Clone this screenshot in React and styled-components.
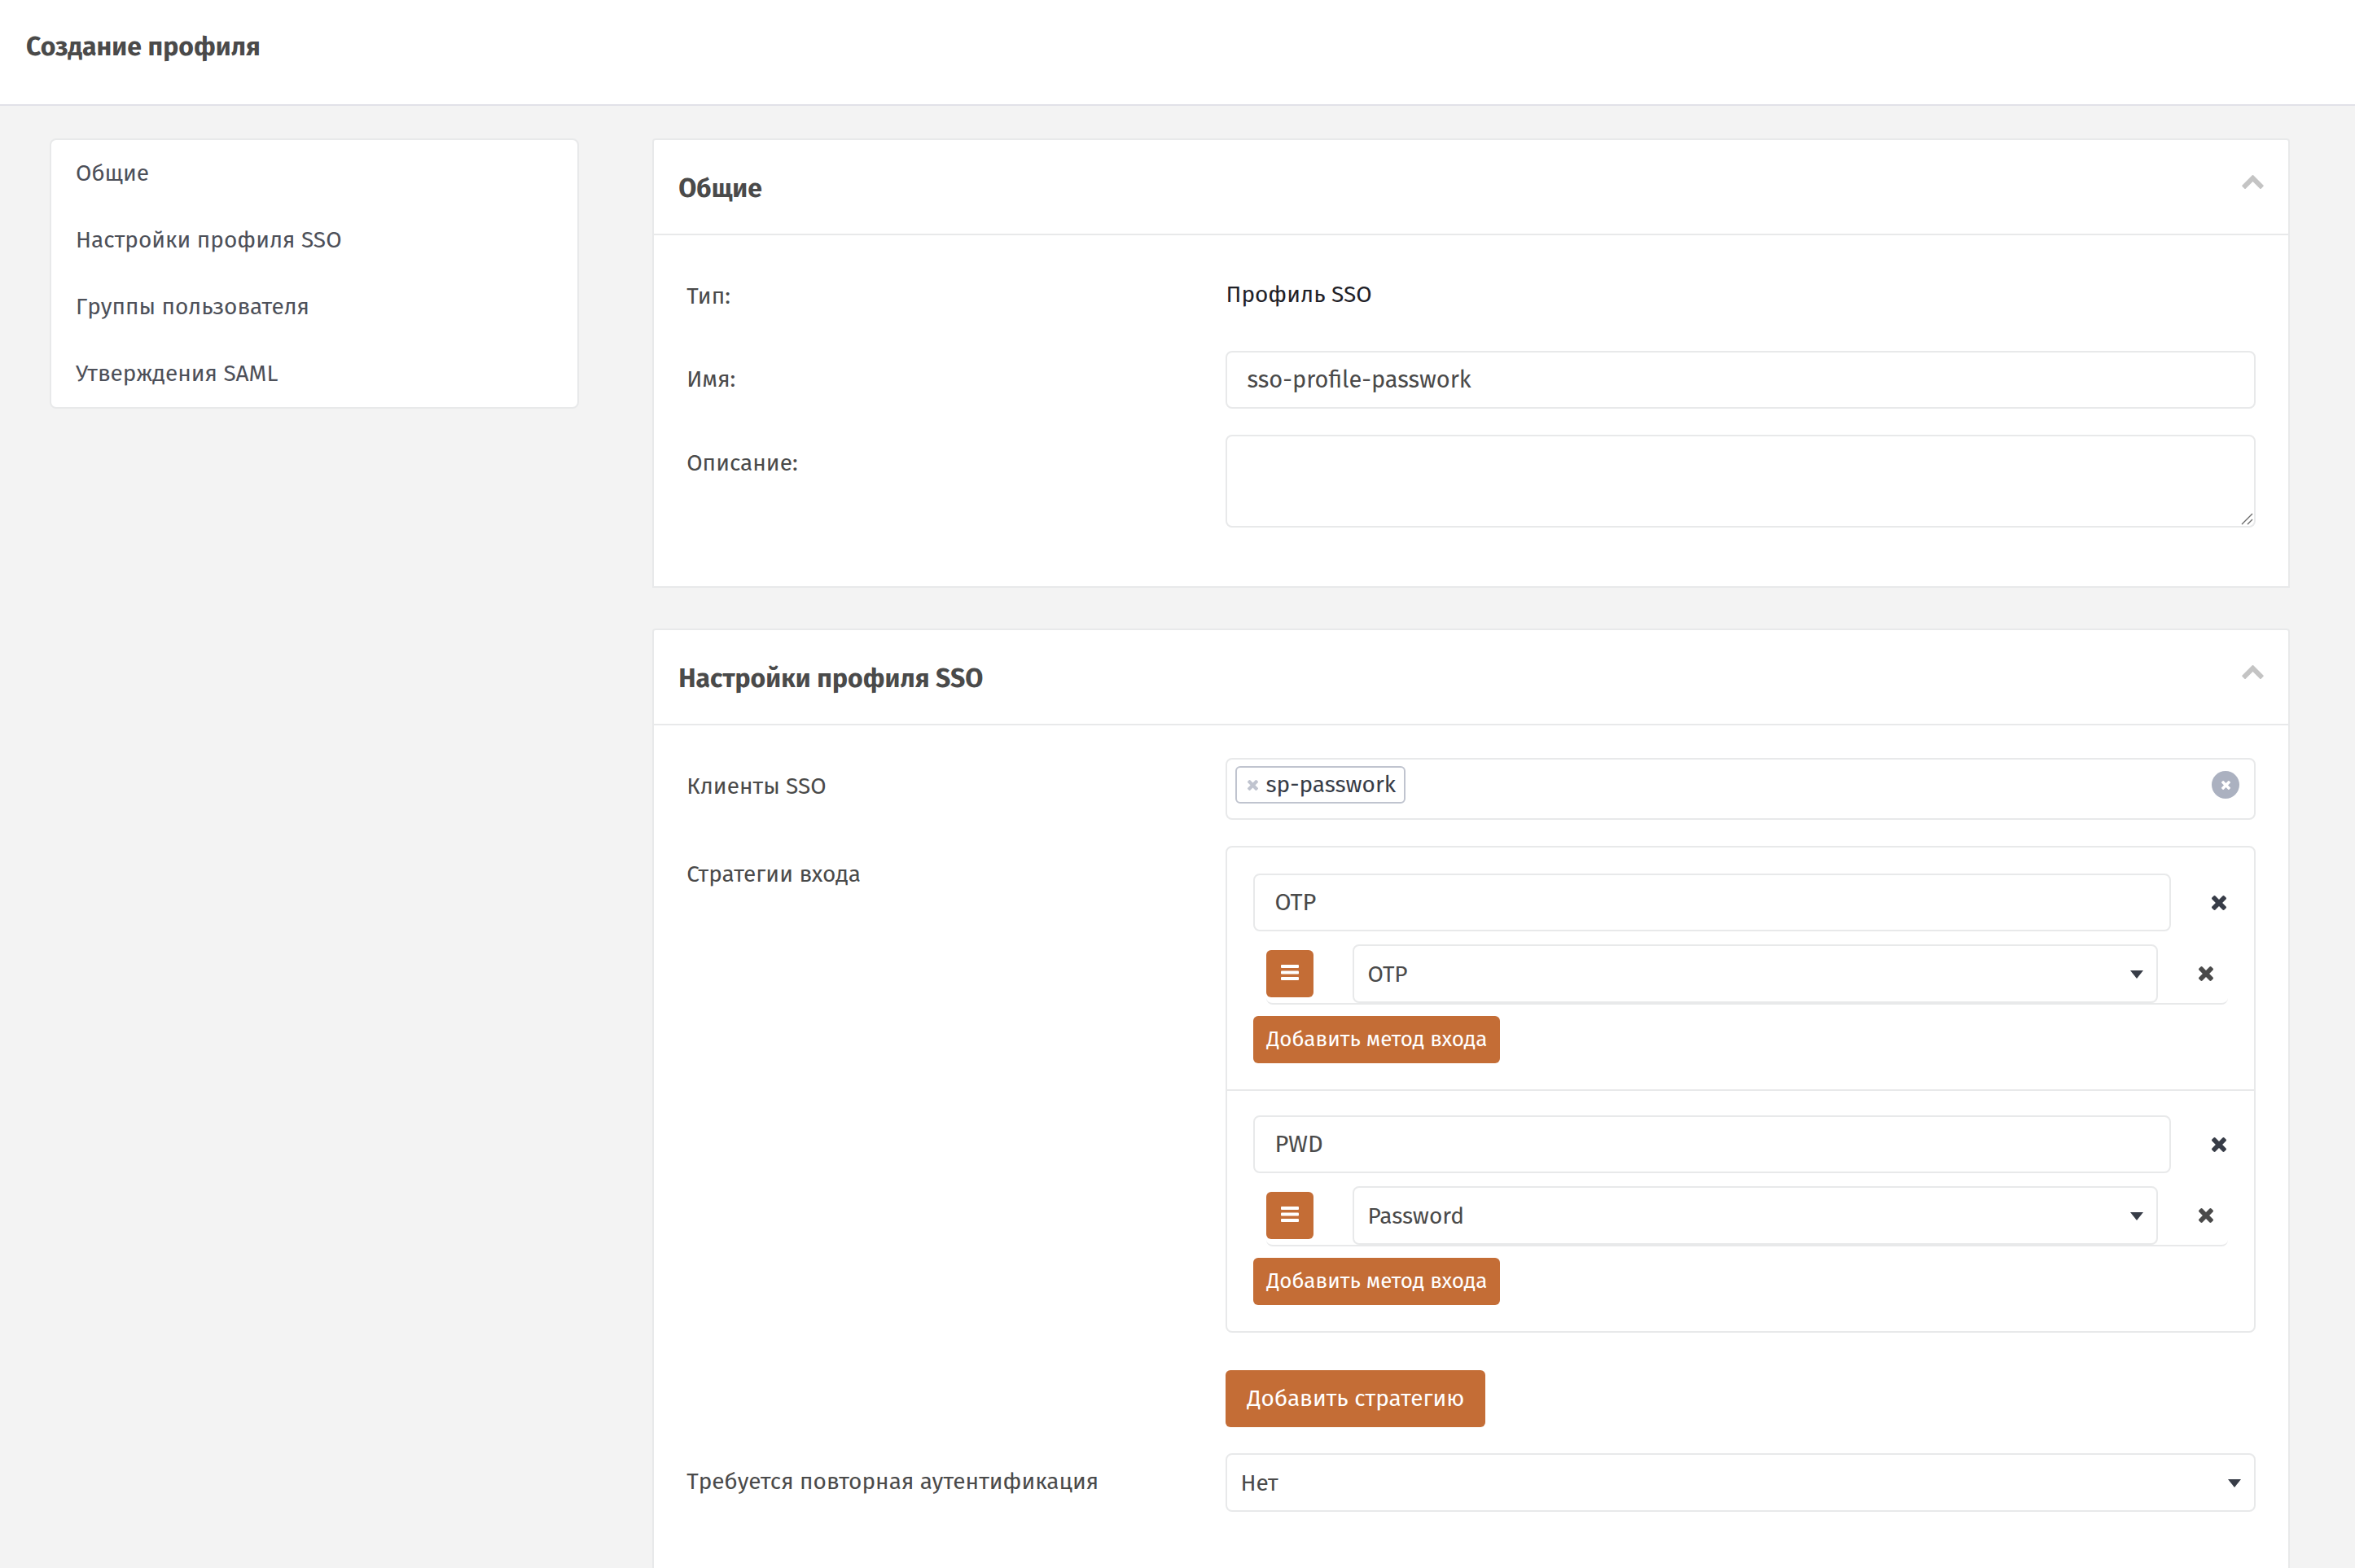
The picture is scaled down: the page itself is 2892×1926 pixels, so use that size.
import React from "react";
import styled, { createGlobalStyle } from "styled-components";

const color = {
  page: "#f3f3f3",
  surface: "#ffffff",
  border: "#e8e9ea",
  text: "#4a4a4a",
  nav: "#4d5059",
  dark: "#373c47",
  ink: "#1f2127",
  accent: "#c46d36",
  tag: "#c0c4cf",
  clear: "#abb1c0",
  chevron: "#c4c4c4",
};

const GlobalStyle = createGlobalStyle`
  *, *::before, *::after { box-sizing: border-box; }
  body {
    margin: 0;
    background: ${color.page};
    color: ${color.text};
    font-family: "Fira Sans", Roboto, "Noto Sans", sans-serif;
    font-size: 28px;
    line-height: 36px;
  }
  button, input, select, textarea { font: inherit; color: inherit; }
  button { cursor: pointer; }
`;

const Shell = styled.div`
  height: 100vh;
  overflow: hidden;
`;

const TopBar = styled.header`
  height: 130px;
  padding: 0 32px;
  background: ${color.surface};
  border-bottom: 2px solid #e1e1e8;
`;

const PageTitle = styled.h1`
  margin: 0;
  font-size: 32px;
  line-height: 114px;
  font-weight: 700;
`;

const Layout = styled.div`
  display: grid;
  grid-template-columns: minmax(0, 65fr) minmax(0, 201fr);
  gap: 90px;
  align-items: start;
  padding: 40px 80px 40px 61px;
`;

const SideNav = styled.nav`
  display: flex;
  flex-direction: column;
  background: ${color.surface};
  border: 2px solid ${color.border};
  border-radius: 8px;
`;

const NavLink = styled.a`
  padding: 0 30px;
  line-height: 82px;
  color: ${color.nav};
  text-decoration: none;
`;

const Cards = styled.main`
  display: flex;
  flex-direction: column;
  gap: 50px;
`;

const Card = styled.section`
  background: ${color.surface};
  border: 2px solid ${color.border};
  border-radius: 4px 4px 0 0;
`;

const CardHeader = styled.header`
  display: flex;
  align-items: center;
  justify-content: space-between;
  height: 117px;
  padding: 0 30px;
  border-bottom: 2px solid ${color.border};
`;

const CardTitle = styled.h2`
  margin: 0;
  padding-top: 2px;
  font-size: 32px;
  line-height: 40px;
  font-weight: 700;
`;

const IconButton = styled.button`
  display: flex;
  padding: 0;
  border: 0;
  background: none;
  color: ${(p) => p.$color};
`;

const CollapseButton = styled(IconButton)`
  padding-bottom: 12px;
`;

const CardBody = styled.div`
  display: flex;
  flex-direction: column;
  gap: 32px;
  padding: 40px 40px 72px;
`;

const Row = styled.div`
  display: grid;
  grid-template-columns: minmax(0, 1fr) minmax(0, 2fr);
  column-gap: 30px;
  align-items: start;
`;

const Label = styled.label`
  line-height: 70px;
  height: 70px;
`;

const Value = styled.output`
  line-height: 66px;
  color: ${color.ink};
`;

const TextInput = styled.input`
  width: 100%;
  height: 71px;
  padding: 0 24px;
  border: 2px solid ${color.border};
  border-radius: 8px;
  background: ${color.surface};
  font-size: 29px;
  outline: none;
`;

const AreaWrap = styled.div`
  position: relative;
  display: flex;
  svg {
    position: absolute;
    right: 3px;
    bottom: 3px;
  }
`;

const TextArea = styled.textarea`
  width: 100%;
  height: 114px;
  padding: 16px 24px;
  border: 2px solid ${color.border};
  border-radius: 8px;
  background: ${color.surface};
  resize: none;
  outline: none;
`;

const SelectWrap = styled.div`
  position: relative;
  flex: 1;
  display: flex;
  svg {
    position: absolute;
    right: 18px;
    top: 32px;
    pointer-events: none;
  }
`;

const Select = styled.select`
  appearance: none;
  width: 100%;
  height: 72px;
  padding: 2px 48px 0 16px;
  border: 2px solid ${color.border};
  border-radius: 8px;
  background: ${color.surface};
  outline: none;
`;

const TagBox = styled.div`
  display: flex;
  align-items: flex-start;
  justify-content: space-between;
  height: 76px;
  padding: 8px 18px 8px 10px;
  border: 2px solid ${color.border};
  border-radius: 8px;
`;

const Tag = styled.span`
  display: flex;
  align-items: center;
  gap: 9px;
  height: 46px;
  padding: 0 10px 0 13px;
  border: 2px solid ${color.tag};
  border-radius: 6px;
  line-height: 42px;
  color: ${color.dark};
`;

const ClearButton = styled.button`
  display: grid;
  place-items: center;
  width: 34px;
  height: 34px;
  margin-top: 6px;
  padding: 0;
  border: 0;
  border-radius: 50%;
  background: ${color.clear};
  color: ${color.surface};
`;

const Strategies = styled.div`
  border: 2px solid ${color.border};
  border-radius: 8px;
`;

const Strategy = styled.div`
  padding: 32px;
  & + & {
    padding-top: 30px;
    border-top: 2px solid ${color.border};
  }
`;

const StrategyHead = styled.div`
  display: flex;
  align-items: center;
  gap: 50px;
  padding-right: 2px;
  margin-bottom: 16px;
`;

const MethodRow = styled.div`
  display: flex;
  align-items: center;
  margin: 0 0 14px 16px;
  padding-right: 18px;
  border-bottom: 2px solid ${color.border};
  border-radius: 8px;
`;

const DragButton = styled.button`
  display: grid;
  place-items: center;
  width: 58px;
  height: 58px;
  margin-right: 48px;
  padding: 0 0 2px;
  border: 0;
  border-radius: 6px;
  background: ${color.accent};
  color: ${color.surface};
`;

const MethodRemove = styled(IconButton)`
  margin-left: 50px;
`;

const Button = styled.button`
  height: ${(p) => (p.$small ? 58 : 70)}px;
  padding: 0 ${(p) => (p.$small ? 16 : 26)}px;
  border: 0;
  border-radius: 6px;
  background: ${color.accent};
  color: ${color.surface};
  font-size: ${(p) => (p.$small ? 26 : 28)}px;
  font-weight: 400;
`;

const StrategyColumn = styled.div`
  display: flex;
  flex-direction: column;
  align-items: flex-start;
  gap: 46px;
  & > ${Strategies} { width: 100%; }
`;

const Cross = ({ size }) => (
  <svg width={size} height={size} viewBox="302 366 1188 1188" fill="currentColor" aria-hidden="true">
    <path d="M1490 1322q0 40-28 68l-136 136q-28 28-68 28t-68-28l-294-294-294 294q-28 28-68 28t-68-28l-136-136q-28-28-28-68t28-68l294-294-294-294q-28-28-28-68t28-68l136-136q28-28 68-28t68 28l294 294 294-294q28-28 68-28t68 28l136 136q28 28 28 68t-28 68l-294 294 294 294q28 28 28 68z" />
  </svg>
);

const ChevronUp = () => (
  <svg width="27" height="17" viewBox="90 480 1612 1035" fill="currentColor" aria-hidden="true">
    <path d="M1683 1331l-166 165q-19 19-45 19t-45-19l-531-531-531 531q-19 19-45 19t-45-19l-166-165q-19-19-19-45.5t19-45.5l742-741q19-19 45-19t45 19l742 741q19 19 19 45.5t-19 45.5z" />
  </svg>
);

const Bars = () => (
  <svg width="22" height="20" viewBox="0 0 22 20" fill="currentColor" aria-hidden="true">
    <rect y="0" width="22" height="4" rx="1" />
    <rect y="7.5" width="22" height="4" rx="1" />
    <rect y="15" width="22" height="4" rx="1" />
  </svg>
);

const Caret = () => (
  <svg width="16" height="10" viewBox="0 0 16 10" fill={color.dark} aria-hidden="true">
    <path d="M0 0H16L8 10Z" />
  </svg>
);

const Grip = () => (
  <svg width="15" height="15" viewBox="0 0 15 15" stroke="#6a6a6a" strokeWidth="1.4" fill="none" aria-hidden="true">
    <path d="M1 14L14 1M8 14L14 8" />
  </svg>
);

const Dropdown = ({ options, ...rest }) => (
  <SelectWrap>
    <Select {...rest}>
      {options.map((o) => (
        <option key={o}>{o}</option>
      ))}
    </Select>
    <Caret />
  </SelectWrap>
);

const Panel = ({ id, title, children }) => (
  <Card id={id}>
    <CardHeader>
      <CardTitle>{title}</CardTitle>
      <CollapseButton type="button" $color={color.chevron} aria-label="Свернуть">
        <ChevronUp />
      </CollapseButton>
    </CardHeader>
    <CardBody>{children}</CardBody>
  </Card>
);

const sections = [
  ["general", "Общие"],
  ["sso", "Настройки профиля SSO"],
  ["groups", "Группы пользователя"],
  ["saml", "Утверждения SAML"],
];

const strategies = [
  { name: "OTP", method: "OTP" },
  { name: "PWD", method: "Password" },
];

export default function App() {
  return (
    <Shell>
      <GlobalStyle />
      <TopBar>
        <PageTitle>Создание профиля</PageTitle>
      </TopBar>
      <Layout>
        <SideNav>
          {sections.map(([id, title]) => (
            <NavLink key={id} href={`#${id}`}>{title}</NavLink>
          ))}
        </SideNav>
        <Cards>
          <Panel id="general" title="Общие">
            <Row>
              <Label htmlFor="type">Тип:</Label>
              <Value id="type">Профиль SSO</Value>
            </Row>
            <Row>
              <Label htmlFor="name">Имя:</Label>
              <TextInput id="name" defaultValue="sso-profile-passwork" />
            </Row>
            <Row>
              <Label htmlFor="description">Описание:</Label>
              <AreaWrap>
                <TextArea id="description" />
                <Grip />
              </AreaWrap>
            </Row>
          </Panel>
          <Panel id="sso" title="Настройки профиля SSO">
            <Row>
              <Label as="span" id="clients">Клиенты SSO</Label>
              <TagBox role="group" aria-labelledby="clients">
                <Tag>
                  <IconButton type="button" $color={color.tag} aria-label="Удалить">
                    <Cross size={13} />
                  </IconButton>
                  sp-passwork
                </Tag>
                <ClearButton type="button" aria-label="Очистить">
                  <Cross size={11} />
                </ClearButton>
              </TagBox>
            </Row>
            <Row>
              <Label as="span" id="strategies">Стратегии входа</Label>
              <StrategyColumn role="group" aria-labelledby="strategies">
                <Strategies>
                  {strategies.map(({ name, method }) => (
                    <Strategy key={name}>
                      <StrategyHead>
                        <TextInput defaultValue={name} aria-label="Стратегия" />
                        <IconButton type="button" $color={color.dark} aria-label="Удалить">
                          <Cross size={18} />
                        </IconButton>
                      </StrategyHead>
                      <MethodRow>
                        <DragButton type="button" aria-label="Переместить">
                          <Bars />
                        </DragButton>
                        <Dropdown options={["OTP", "Password"]} defaultValue={method} aria-label="Метод входа" />
                        <MethodRemove type="button" $color={color.text} aria-label="Удалить">
                          <Cross size={18} />
                        </MethodRemove>
                      </MethodRow>
                      <Button type="button" $small>Добавить метод входа</Button>
                    </Strategy>
                  ))}
                </Strategies>
                <Button type="button">Добавить стратегию</Button>
              </StrategyColumn>
            </Row>
            <Row>
              <Label htmlFor="reauth">Требуется повторная аутентификация</Label>
              <Dropdown id="reauth" options={["Нет", "Да"]} defaultValue="Нет" />
            </Row>
          </Panel>
        </Cards>
      </Layout>
    </Shell>
  );
}
